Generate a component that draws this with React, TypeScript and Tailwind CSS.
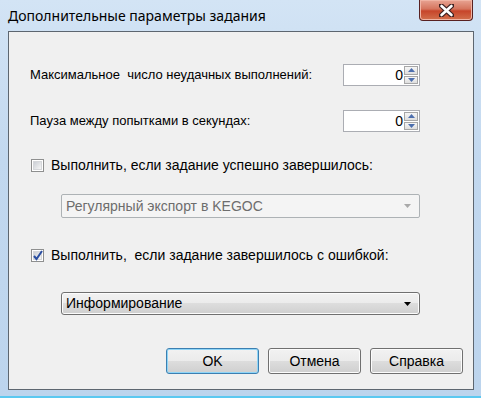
import React from "react";

const font = { fontFamily: '"Liberation Sans", Arial, sans-serif' };

const SpinBox = () => (
  <div className="w-[77px] h-[22px] border border-[#abadb3] bg-white flex items-center">
    <span className="flex-1 text-right pr-[1px] text-[14px] text-black leading-none">0</span>
    <div className="w-[15px] h-full flex flex-col gap-[1px] p-[1px] pl-0">
      <div className="flex-1 border border-[#a7a7a7] bg-gradient-to-b from-[#f6f6f6] to-[#dedede] flex items-center justify-center">
        <svg width="7" height="4" viewBox="0 0 7 4"><path d="M0 4 L3.5 0 L7 4 Z" fill="#4d6fae" /></svg>
      </div>
      <div className="flex-1 border border-[#a7a7a7] bg-gradient-to-b from-[#f6f6f6] to-[#dedede] flex items-center justify-center">
        <svg width="7" height="4" viewBox="0 0 7 4"><path d="M0 0 L3.5 4 L7 0 Z" fill="#4d6fae" /></svg>
      </div>
    </div>
  </div>
);

const CheckBox = ({ checked }: { checked?: boolean }) => (
  <div className="w-[13px] h-[13px] border border-[#8e8f8f] bg-white p-[1px] flex">
    <div className="flex-1 bg-gradient-to-br from-[#cbcfd5] to-[#f6f6f6] border border-[#d5d7da] relative">
      {checked && (
        <svg className="absolute -left-[1px] -top-[2px]" width="10" height="11" viewBox="0 0 10 11">
          <path d="M1 6 L3.5 9 L9 1" stroke="#2a4ea1" strokeWidth="2" fill="none" />
        </svg>
      )}
    </div>
  </div>
);

const Btn = ({ label, def }: { label: string; def?: boolean }) => (
  <button
    className={
      "w-[93px] h-[26px] rounded-[3px] border text-[14px] text-black bg-[linear-gradient(#f2f2f2_0%,#ebebeb_50%,#dddddd_50%,#cfcfcf_100%)] " +
      (def ? "border-[#3c7fb1] shadow-[inset_0_0_0_1px_#8fd5f7]" : "border-[#707070] shadow-[inset_0_0_0_1px_#fcfcfc]")
    }
    style={font}
  >
    {label}
  </button>
);

export default function App() {
  return (
    <div className="w-[481px] h-[398px] bg-[linear-gradient(180deg,#d3e4f5_0%,#c2d8ef_40%,#bcd4ed_100%)] flex flex-col relative overflow-hidden" style={font}>
      <div className="h-[31px] flex items-start relative shrink-0">
        <span className="pl-[8px] pt-[5px] text-[14px] text-black" style={{ fontFamily: '"Noto Sans", sans-serif' }}>
          Дополнительные параметры задания
        </span>
        <div className="absolute right-[8px] top-0 w-[54px] h-[21px] rounded-b-[4px] border border-t-0 border-[#582121] bg-[linear-gradient(#e8a493_0%,#d5745d_45%,#c7452a_55%,#d2704c_100%)] shadow-[inset_0_0_0_1px_#f0b4a4] flex items-center justify-center">
          <svg width="15" height="13" viewBox="0 0 15 13">
            <path d="M2 1.5 L13 11.5 M13 1.5 L2 11.5" stroke="#3f2222" strokeWidth="5" strokeLinecap="round" />
            <path d="M2.5 2 L12.5 11 M12.5 2 L2.5 11" stroke="#ffffff" strokeWidth="2.6" strokeLinecap="round" />
          </svg>
        </div>
      </div>
      <div className="ml-[8px] w-[466px] h-[359px] border border-[#5d6670] bg-[#f0f0f0] flex flex-col text-[14px] text-black shrink-0">
        <div className="mt-[32px] h-[22px] pl-[21px] pr-[53px] flex items-center justify-between">
          <span className="text-[13px]">Максимальное&nbsp; число неудачных выполнений:</span>
          <SpinBox />
        </div>
        <div className="mt-[24px] h-[22px] pl-[21px] pr-[53px] flex items-center justify-between">
          <span className="text-[13px]">Пауза между попытками в секундах:</span>
          <SpinBox />
        </div>
        <div className="mt-[27px] h-[13px] pl-[22px] flex items-center gap-[7px]">
          <CheckBox />
          <span>Выполнить, если задание успешно завершилось:</span>
        </div>
        <div className="mt-[22px] pl-[52px] pr-[53px]">
          <div className="h-[24px] border border-[#adb2b5] rounded-[2px] bg-[#f4f4f4] flex items-center pl-[4px] pr-[8px] text-[#6d6d6d]">
            <span className="flex-1">Регулярный экспорт в KEGOC</span>
            <svg width="7" height="4" viewBox="0 0 7 4"><path d="M0 0 L3.5 4 L7 0 Z" fill="#a9a9a9" /></svg>
          </div>
        </div>
        <div className="mt-[31px] h-[13px] pl-[22px] flex items-center gap-[7px]">
          <CheckBox checked />
          <span>Выполнить,&nbsp; если задание завершилось с ошибкой:</span>
        </div>
        <div className="mt-[30px] pl-[52px] pr-[53px]">
          <div className="h-[23px] border border-[#707070] rounded-[3px] bg-[linear-gradient(#f2f2f2_0%,#ebebeb_50%,#dddddd_50%,#cfcfcf_100%)] shadow-[inset_0_0_0_1px_#fcfcfc] flex items-center pl-[4px] pr-[8px]">
            <span className="flex-1">Информирование</span>
            <svg width="7" height="4" viewBox="0 0 7 4"><path d="M0 0 L3.5 4 L7 0 Z" fill="#000000" /></svg>
          </div>
        </div>
        <div className="mt-[33px] pr-[10px] flex justify-end gap-[9px]">
          <Btn label="OK" def />
          <Btn label="Отмена" />
          <Btn label="Справка" />
        </div>
      </div>
      <div className="absolute bottom-0 left-0 right-0 h-[2px] bg-[#5bc8f0]" />
    </div>
  );
}
